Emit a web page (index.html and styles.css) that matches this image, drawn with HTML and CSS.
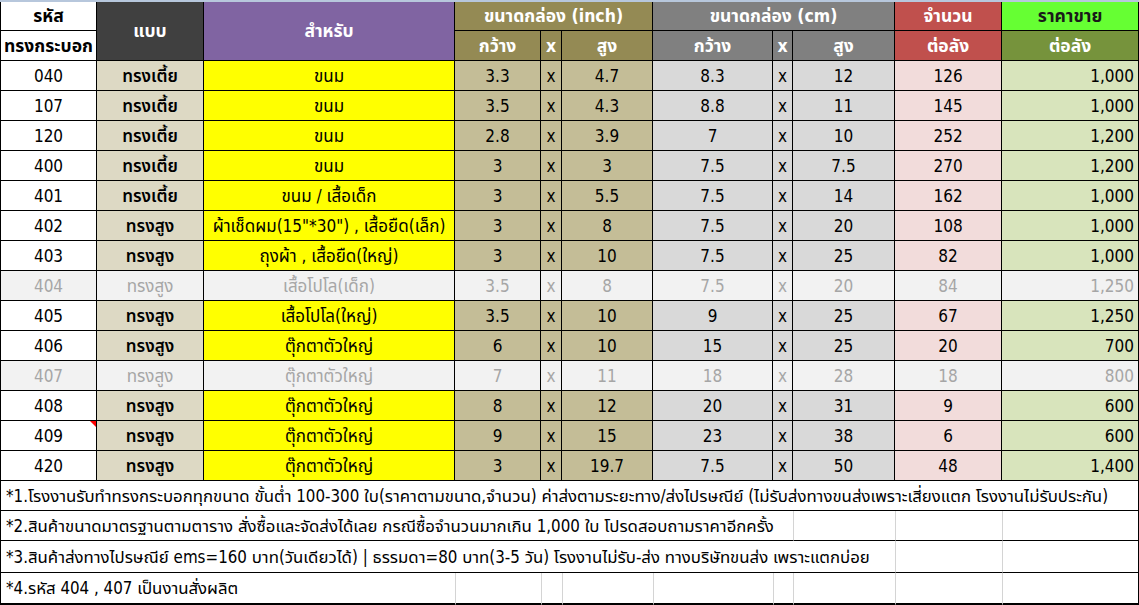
FILE: index.html
```html
<!DOCTYPE html>
<html lang="th">
<head>
<meta charset="utf-8">
<title>ราคากล่องทรงกระบอก</title>
<link rel="stylesheet" href="styles.css">
</head>
<body>
<div class="sheet">
<table class="grid">
<colgroup>
<col class="w-code"><col class="w-type"><col class="w-use">
<col class="w-iw"><col class="w-ix"><col class="w-ih">
<col class="w-cw"><col class="w-cx"><col class="w-ch">
<col class="w-qty"><col class="w-price">
</colgroup>
<thead>
<tr class="row">
<th class="first hd-code">รหัส</th>
<th class="hd-type" rowspan="2">แบบ</th>
<th class="hd-use" rowspan="2">สำหรับ</th>
<th class="hd-inch" colspan="3">ขนาดกล่อง (inch)</th>
<th class="hd-cm" colspan="3">ขนาดกล่อง (cm)</th>
<th class="hd-qty">จำนวน</th>
<th class="hd-price">ราคาขาย</th>
</tr>
<tr class="row">
<th class="first hd-code">ทรงกระบอก</th>
<th class="hd-inch">กว้าง</th><th class="hd-inch">x</th><th class="hd-inch">สูง</th>
<th class="hd-cm">กว้าง</th><th class="hd-cm">x</th><th class="hd-cm">สูง</th>
<th class="hd-qty">ต่อลัง</th>
<th class="hd-price2">ต่อลัง</th>
</tr>
</thead>
<tbody>
<tr class="row item"><td class="first code">040</td><td class="type">ทรงเตี้ย</td><td class="use">ขนม</td><td class="inch">3.3</td><td class="inch">x</td><td class="inch">4.7</td><td class="cm">8.3</td><td class="cm">x</td><td class="cm">12</td><td class="qty">126</td><td class="price">1,000</td></tr>
<tr class="row item"><td class="first code">107</td><td class="type">ทรงเตี้ย</td><td class="use">ขนม</td><td class="inch">3.5</td><td class="inch">x</td><td class="inch">4.3</td><td class="cm">8.8</td><td class="cm">x</td><td class="cm">11</td><td class="qty">145</td><td class="price">1,000</td></tr>
<tr class="row item"><td class="first code">120</td><td class="type">ทรงเตี้ย</td><td class="use">ขนม</td><td class="inch">2.8</td><td class="inch">x</td><td class="inch">3.9</td><td class="cm">7</td><td class="cm">x</td><td class="cm">10</td><td class="qty">252</td><td class="price">1,200</td></tr>
<tr class="row item"><td class="first code">400</td><td class="type">ทรงเตี้ย</td><td class="use">ขนม</td><td class="inch">3</td><td class="inch">x</td><td class="inch">3</td><td class="cm">7.5</td><td class="cm">x</td><td class="cm">7.5</td><td class="qty">270</td><td class="price">1,200</td></tr>
<tr class="row item"><td class="first code">401</td><td class="type">ทรงเตี้ย</td><td class="use">ขนม / เสื้อเด็ก</td><td class="inch">3</td><td class="inch">x</td><td class="inch">5.5</td><td class="cm">7.5</td><td class="cm">x</td><td class="cm">14</td><td class="qty">162</td><td class="price">1,000</td></tr>
<tr class="row item"><td class="first code">402</td><td class="type">ทรงสูง</td><td class="use">ผ้าเช็ดผม(15"*30") , เสื้อยืด(เล็ก)</td><td class="inch">3</td><td class="inch">x</td><td class="inch">8</td><td class="cm">7.5</td><td class="cm">x</td><td class="cm">20</td><td class="qty">108</td><td class="price">1,000</td></tr>
<tr class="row item"><td class="first code">403</td><td class="type">ทรงสูง</td><td class="use">ถุงผ้า , เสื้อยืด(ใหญ่)</td><td class="inch">3</td><td class="inch">x</td><td class="inch">10</td><td class="cm">7.5</td><td class="cm">x</td><td class="cm">25</td><td class="qty">82</td><td class="price">1,000</td></tr>
<tr class="row item off"><td class="first code">404</td><td class="type">ทรงสูง</td><td class="use">เสื้อโปโล(เด็ก)</td><td class="inch">3.5</td><td class="inch">x</td><td class="inch">8</td><td class="cm">7.5</td><td class="cm">x</td><td class="cm">20</td><td class="qty">84</td><td class="price">1,250</td></tr>
<tr class="row item"><td class="first code">405</td><td class="type">ทรงสูง</td><td class="use">เสื้อโปโล(ใหญ่)</td><td class="inch">3.5</td><td class="inch">x</td><td class="inch">10</td><td class="cm">9</td><td class="cm">x</td><td class="cm">25</td><td class="qty">67</td><td class="price">1,250</td></tr>
<tr class="row item"><td class="first code">406</td><td class="type">ทรงสูง</td><td class="use">ตุ๊กตาตัวใหญ่</td><td class="inch">6</td><td class="inch">x</td><td class="inch">10</td><td class="cm">15</td><td class="cm">x</td><td class="cm">25</td><td class="qty">20</td><td class="price">700</td></tr>
<tr class="row item off"><td class="first code">407</td><td class="type">ทรงสูง</td><td class="use">ตุ๊กตาตัวใหญ่</td><td class="inch">7</td><td class="inch">x</td><td class="inch">11</td><td class="cm">18</td><td class="cm">x</td><td class="cm">28</td><td class="qty">18</td><td class="price">800</td></tr>
<tr class="row item"><td class="first code">408</td><td class="type">ทรงสูง</td><td class="use">ตุ๊กตาตัวใหญ่</td><td class="inch">8</td><td class="inch">x</td><td class="inch">12</td><td class="cm">20</td><td class="cm">x</td><td class="cm">31</td><td class="qty">9</td><td class="price">600</td></tr>
<tr class="row item"><td class="first code commented">409</td><td class="type">ทรงสูง</td><td class="use">ตุ๊กตาตัวใหญ่</td><td class="inch">9</td><td class="inch">x</td><td class="inch">15</td><td class="cm">23</td><td class="cm">x</td><td class="cm">38</td><td class="qty">6</td><td class="price">600</td></tr>
<tr class="row item"><td class="first code">420</td><td class="type">ทรงสูง</td><td class="use">ตุ๊กตาตัวใหญ่</td><td class="inch">3</td><td class="inch">x</td><td class="inch">19.7</td><td class="cm">7.5</td><td class="cm">x</td><td class="cm">50</td><td class="qty">48</td><td class="price">1,400</td></tr>
</tbody>
<tbody class="notes">
<tr class="row note"><td class="first text full" colspan="11">*1.โรงงานรับทำทรงกระบอกทุกขนาด ขั้นต่ำ 100-300 ใบ(ราคาตามขนาด,จำนวน) ค่าส่งตามระยะทาง/ส่งไปรษณีย์ (ไม่รับส่งทางขนส่งเพราะเสี่ยงแตก โรงงานไม่รับประกัน)</td></tr>
<tr class="row note"><td class="first text" colspan="8">*2.สินค้าขนาดมาตรฐานตามตาราง สั่งซื้อและจัดส่งได้เลย กรณีซื้อจำนวนมากเกิน 1,000 ใบ โปรดสอบถามราคาอีกครั้ง</td><td class="blank"></td><td class="blank"></td><td class="blank"></td></tr>
<tr class="row note tall"><td class="first text" colspan="9">*3.สินค้าส่งทางไปรษณีย์ ems=160 บาท(วันเดียวได้) | ธรรมดา=80 บาท(3-5 วัน) โรงงานไม่รับ-ส่ง ทางบริษัทขนส่ง เพราะแตกบ่อย</td><td class="blank"></td><td class="blank"></td></tr>
<tr class="row note last"><td class="first text" colspan="3">*4.รหัส 404 , 407 เป็นงานสั่งผลิต</td><td class="blank"></td><td class="blank"></td><td class="blank"></td><td class="blank"></td><td class="blank"></td><td class="blank"></td><td class="blank"></td><td class="blank"></td></tr>
</tbody>
</table>
</div>
</body>
</html>
```
FILE: styles.css
```css
html, body {
  margin: 0;
  padding: 0;
  background: #ffffff;
}

.sheet {
  width: 1139px;
  border-top: 2px solid #b7c7dc;
}

.grid {
  width: 1139px;
  table-layout: fixed;
  border-collapse: separate;
  border-spacing: 0;
  font-family: Tahoma, "DejaVu Sans Condensed", "Noto Sans Thai", "Noto Sans Thai UI", Loma, Garuda, sans-serif;
  font-size: 17px;
  color: #000;
}

.w-code { width: 97px; }
.w-type { width: 107px; }
.w-use { width: 251px; }
.w-iw { width: 86px; }
.w-ix { width: 21px; }
.w-ih { width: 91px; }
.w-cw { width: 120px; }
.w-cx { width: 20px; }
.w-ch { width: 102px; }
.w-qty { width: 107px; }
.w-price { width: 137px; }

.grid th,
.grid td {
  box-sizing: border-box;
  padding: 0;
  border-right: 1px solid #000;
  border-bottom: 1px solid #000;
  text-align: center;
  vertical-align: middle;
  white-space: nowrap;
  line-height: 18px;
  overflow: visible;
}

.grid .first {
  border-left: 1px solid #000;
}

.row {
  height: 30px;
}

thead .row:first-child {
  height: 29px;
}

/* header colours */
.grid th {
  font-weight: bold;
  font-size: 17.5px;
  color: #fff;
}
.grid th.hd-code { background: #fff; color: #000; }
.hd-type { background: #404040; }
.hd-use { background: #8064a2; }
.hd-inch { background: #948a54; }
.hd-cm { background: #808080; }
.hd-qty { background: #c0504d; }
.grid th.hd-price { background: #66ff33; color: #1a1a1a; }
.hd-price2 { background: #76933c; color: #f2f5ea; }

/* body colours */
.code { background: #fff; }
.type { background: #ddd9c4; font-weight: 600; }
.use { background: #ffff00; }
.inch { background: #c4bd97; }
.cm { background: #d9d9d9; }
.qty { background: #f2dcdb; }
.grid td.price { background: #d8e4bc; text-align: right; padding-right: 4px; }

.item.off td {
  background: #f2f2f2;
  color: #a6a6a6;
  font-weight: normal;
}

.commented {
  position: relative;
}
.commented::after {
  content: "";
  position: absolute;
  top: 0;
  right: 0;
  border-top: 6px solid #ff0000;
  border-left: 6px solid transparent;
}

/* notes */
.grid .note .text {
  text-align: left;
  padding-left: 5px;
  font-size: 16.8px;
  background: #fff;
  border-right: none;
}
.grid .note .text.full {
  border-right: 1px solid #000;
}
.grid .note .blank {
  border-right: none;
  border-left: 1px solid #d4d4d4;
  background: #fff;
}
.grid .note .blank:last-child {
  border-right: 1px solid #000;
}
.note.tall {
  height: 32px;
}
.grid .note.last td {
  border-bottom: 3px solid #000;
}
.note.last {
  height: 33px;
}
```
